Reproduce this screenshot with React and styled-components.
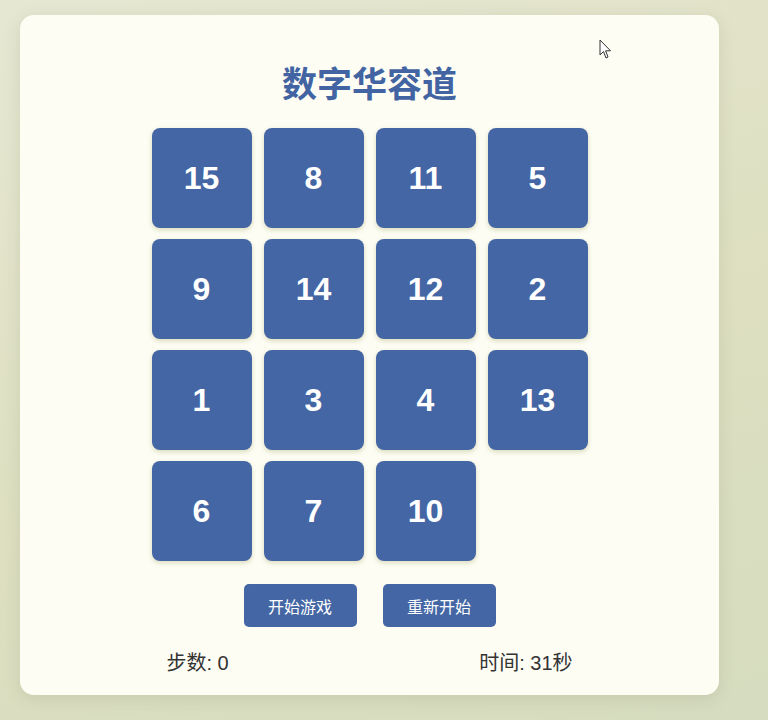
import React from "react";
import styled, { createGlobalStyle } from "styled-components";

const Global = createGlobalStyle`
  html, body { margin: 0; padding: 0; }
  body {
    width: 768px;
    height: 720px;
    overflow: hidden;
    background: linear-gradient(160deg, #e6e7d2 0%, #dddfc0 55%, #d6dcbf 100%);
    font-family: "Liberation Sans", Arial, "Noto Sans CJK SC", sans-serif;
  }
`;

const Page = styled.div`
  padding: 15px 0 0 20px;
`;

const Card = styled.div`
  position: relative;
  width: 699px;
  height: 680px;
  box-sizing: border-box;
  background: #fdfdf4;
  border-radius: 14px;
  box-shadow: 0 4px 16px rgba(120, 130, 100, 0.18);
  display: flex;
  flex-direction: column;
  align-items: center;
  padding-top: 50px;
`;

const Title = styled.h1`
  margin: 0;
  font-family: "Liberation Sans", "Noto Sans CJK SC", sans-serif;
  font-size: 35px;
  font-weight: 700;
  color: #4264a2;
  line-height: 40px;
`;

const Board = styled.div`
  margin-top: 23px;
  display: grid;
  grid-template-columns: repeat(4, 100px);
  grid-auto-rows: 100px;
  column-gap: 12px;
  row-gap: 11px;
`;

const Tile = styled.div`
  background: ${(p) => (p.$empty ? "transparent" : "#4466a4")};
  border-radius: 8px;
  box-shadow: ${(p) => (p.$empty ? "none" : "0 2px 5px rgba(140, 140, 60, 0.3)")};
  color: #ffffff;
  font-family: "Liberation Sans", Arial, sans-serif;
  font-weight: 700;
  font-size: 32px;
  display: flex;
  align-items: center;
  justify-content: center;
`;

const Controls = styled.div`
  margin-top: 23px;
  display: flex;
  gap: 26px;
`;

const Button = styled.button`
  width: 113px;
  height: 43px;
  border: none;
  border-radius: 5px;
  background: #4466a4;
  color: #ffffff;
  font-family: "Noto Sans CJK SC", sans-serif;
  font-size: 16px;
  padding: 0;
  cursor: pointer;
`;

const Stats = styled.div`
  margin-top: 23px;
  width: 406px;
  display: flex;
  justify-content: space-between;
  font-family: "Liberation Sans", "Noto Sans CJK SC", sans-serif;
  font-size: 20px;
  color: #333333;
  line-height: 26px;
`;

const Cursor = styled.svg`
  position: absolute;
  left: 579px;
  top: 24px;
`;

const tiles = [15, 8, 11, 5, 9, 14, 12, 2, 1, 3, 4, 13, 6, 7, 10, 0];

export default function App() {
  return (
    <>
      <Global />
      <Page>
        <Card>
          <Title>数字华容道</Title>
          <Board>
            {tiles.map((n, i) => (
              <Tile key={i} $empty={n === 0}>
                {n === 0 ? "" : n}
              </Tile>
            ))}
          </Board>
          <Controls>
            <Button>开始游戏</Button>
            <Button>重新开始</Button>
          </Controls>
          <Stats>
            <span>步数: 0</span>
            <span>时间: 31秒</span>
          </Stats>
          <Cursor width="14" height="22" viewBox="0 0 14 22">
            <path
              d="M1 1 L1 16 L4.5 12.5 L7 19 L9 18 L6.6 11.8 L11.5 11.8 Z"
              fill="#ffffff"
              stroke="#333333"
              strokeWidth="1"
              strokeLinejoin="round"
            />
          </Cursor>
        </Card>
      </Page>
    </>
  );
}
